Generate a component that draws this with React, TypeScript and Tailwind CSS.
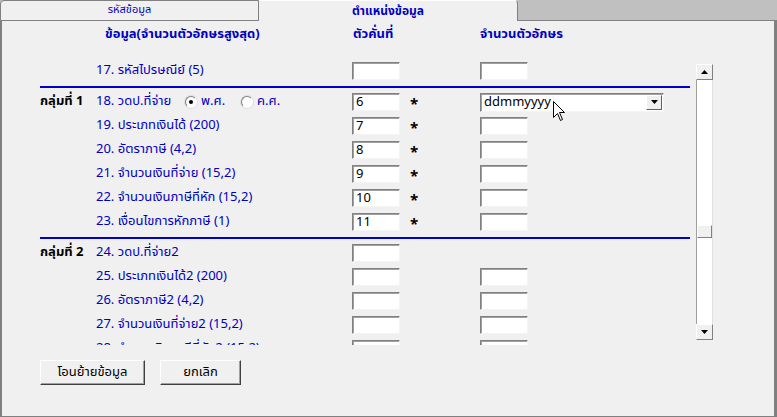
import React from "react";

const font = "font-['Noto_Sans_Thai','Noto_Sans','Liberation_Sans',sans-serif]";

function Box({ value }: { value?: string }) {
  return (
    <div className="h-[18px] w-[48px] bg-white border border-t-[#808080] border-l-[#808080] border-b-[#f4f4f4] border-r-[#f4f4f4] shadow-[inset_1px_1px_0_#a0a0a0] pl-[3px] text-[13px] leading-[16px] text-black">
      {value}
    </div>
  );
}

function Radio({ checked }: { checked?: boolean }) {
  return (
    <span className="w-[12px] h-[12px] rounded-full bg-white border border-t-[#808080] border-l-[#808080] border-b-white border-r-white shadow-[0_0_0_1px_#e0e0e0] flex items-center justify-center">
      {checked && <span className="w-[4px] h-[4px] rounded-full bg-black" />}
    </span>
  );
}

function Dropdown() {
  return (
    <div className="h-[19px] w-[184px] bg-white border border-t-[#808080] border-l-[#808080] border-b-[#f4f4f4] border-r-[#f4f4f4] shadow-[inset_1px_1px_0_#a0a0a0] flex items-center">
      <span className="flex-1 pl-[3px] text-[13px] leading-[16px] text-black">ddmmyyyy</span>
      <span className="w-[16px] h-[15px] mr-[1px] bg-[#f0f0f0] border border-t-white border-l-white border-b-[#606060] border-r-[#606060] flex items-center justify-center">
        <svg width="7" height="4" viewBox="0 0 7 4">
          <path d="M0 0 L7 0 L3.5 4 Z" fill="#000" />
        </svg>
      </span>
    </div>
  );
}

type Row = {
  group?: string;
  label: React.ReactNode;
  sep?: string;
  star?: boolean;
  second?: "box" | "drop" | "none";
};

function DataRow({ group, label, sep, star, second = "box" }: Row) {
  return (
    <div className="h-6 flex items-center">
      <div className="w-[56px] text-[13px] font-bold text-black">{group}</div>
      <div className="w-[256px] text-[13px] text-[#0000c0] flex items-center">{label}</div>
      <Box value={sep} />
      <div className="w-[80px] pl-[10px] flex items-center">
        {star && <span className="text-[15px] leading-[10px] font-bold text-black translate-y-[3px]">*</span>}
      </div>
      {second === "box" && <Box />}
      {second === "drop" && <Dropdown />}
    </div>
  );
}

function Separator() {
  return (
    <div className="h-[7px] pt-[3px]">
      <div className="h-[2px] w-full bg-[#0000cc]" />
    </div>
  );
}

function Button({ children, w }: { children: React.ReactNode; w: string }) {
  return (
    <div
      className={`${w} h-[25px] bg-[#f0f0f0] border border-t-white border-l-white border-b-[#404040] border-r-[#404040] shadow-[inset_-1px_-1px_0_#a0a0a0] flex items-center justify-center text-[13px] text-black`}
    >
      {children}
    </div>
  );
}

function ScrollBtn({ up }: { up?: boolean }) {
  return (
    <div className="h-[16px] w-full bg-[#f0f0f0] border border-t-white border-l-white border-b-[#808080] border-r-[#808080] flex items-center justify-center">
      <svg width="7" height="4" viewBox="0 0 7 4">
        <path d={up ? "M0 4 L7 4 L3.5 0 Z" : "M0 0 L7 0 L3.5 4 Z"} fill="#000" />
      </svg>
    </div>
  );
}

export default function App() {
  return (
    <div className={`relative w-[777px] h-[417px] bg-[#f0f0f0] flex flex-col overflow-hidden ${font}`}>
      {/* tabs */}
      <div className="flex h-[21px] bg-[#c0c0c0]">
        <div className="w-[259px] h-full bg-[#f0f0f0] border border-[#808080] rounded-tl-[4px] flex items-center justify-center text-[11px] text-[#0000c0]">
          รหัสข้อมูล
        </div>
        <div className="w-[259px] h-full bg-[#f0f0f0] border-t border-t-white border-r border-r-[#808080] rounded-tr-[4px] flex items-center justify-center text-[12px] font-bold text-[#0000c0]">
          ตำแหน่งข้อมูล
        </div>
        <div className="flex-1 border-b border-[#808080]" />
      </div>

      {/* panel */}
      <div className="flex-1 flex flex-col border-l-2 border-r-[3px] border-b border-[#808080]">
        <div className="h-[35px] flex pt-[4px] text-[13px] font-bold text-[#0000c0]">
          <div className="w-[103px]" />
          <div className="w-[248px]">ข้อมูล(จำนวนตัวอักษรสูงสุด)</div>
          <div className="w-[127px]">ตัวคั่นที่</div>
          <div>จำนวนตัวอักษร</div>
        </div>

        <div className="h-[289px] flex">
          <div className="ml-[38px] w-[650px] overflow-hidden">
            <div className="-mt-[21px]">
              <DataRow label="" />
              <DataRow label="17. รหัสไปรษณีย์ (5)" />
              <Separator />
              <DataRow
                group="กลุ่มที่ 1"
                label={
                  <>
                    <span className="w-[89px]">18. วดป.ที่จ่าย</span>
                    <Radio checked />
                    <span className="ml-[4px] w-[40px]">พ.ศ.</span>
                    <Radio />
                    <span className="ml-[4px]">ค.ศ.</span>
                  </>
                }
                sep="6"
                star
                second="drop"
              />
              <DataRow label="19. ประเภทเงินได้ (200)" sep="7" star />
              <DataRow label="20. อัตราภาษี (4,2)" sep="8" star />
              <DataRow label="21. จำนวนเงินที่จ่าย (15,2)" sep="9" star />
              <DataRow label="22. จำนวนเงินภาษีที่หัก (15,2)" sep="10" star />
              <DataRow label="23. เงื่อนไขการหักภาษี (1)" sep="11" star />
              <Separator />
              <DataRow group="กลุ่มที่ 2" label="24. วดป.ที่จ่าย2" second="none" />
              <DataRow label="25. ประเภทเงินได้2 (200)" />
              <DataRow label="26. อัตราภาษี2 (4,2)" />
              <DataRow label="27. จำนวนเงินที่จ่าย2 (15,2)" />
              <DataRow label="28. จำนวนเงินภาษีที่หัก2 (15,2)" />
            </div>
          </div>

          <div className="ml-[6px] mt-[8px] h-[276px] w-[17px] flex flex-col">
            <ScrollBtn up />
            <div className="flex-1 bg-white border-l border-l-[#a0a0a0] border-r border-r-[#e0e0e0]">
              <div className="mt-[145px] h-[13px] bg-[#f0f0f0] border border-t-white border-l-white border-b-[#808080] border-r-[#808080]" />
            </div>
            <ScrollBtn />
          </div>
        </div>

        <div className="flex gap-[15px] pl-[38px] pt-[15px]">
          <Button w="w-[105px]">โอนย้ายข้อมูล</Button>
          <Button w="w-[81px]">ยกเลิก</Button>
        </div>
      </div>

      {/* mouse pointer */}
      <svg className="absolute left-[553px] top-[101px]" width="13" height="21" viewBox="0 0 13 21">
        <path d="M0.5 0.5 L0.5 16.5 L4.5 12.5 L7.5 19.5 L9.5 18.5 L6.5 11.5 L11.5 11.5 Z" fill="#fff" stroke="#000" strokeWidth="1" />
      </svg>
    </div>
  );
}
